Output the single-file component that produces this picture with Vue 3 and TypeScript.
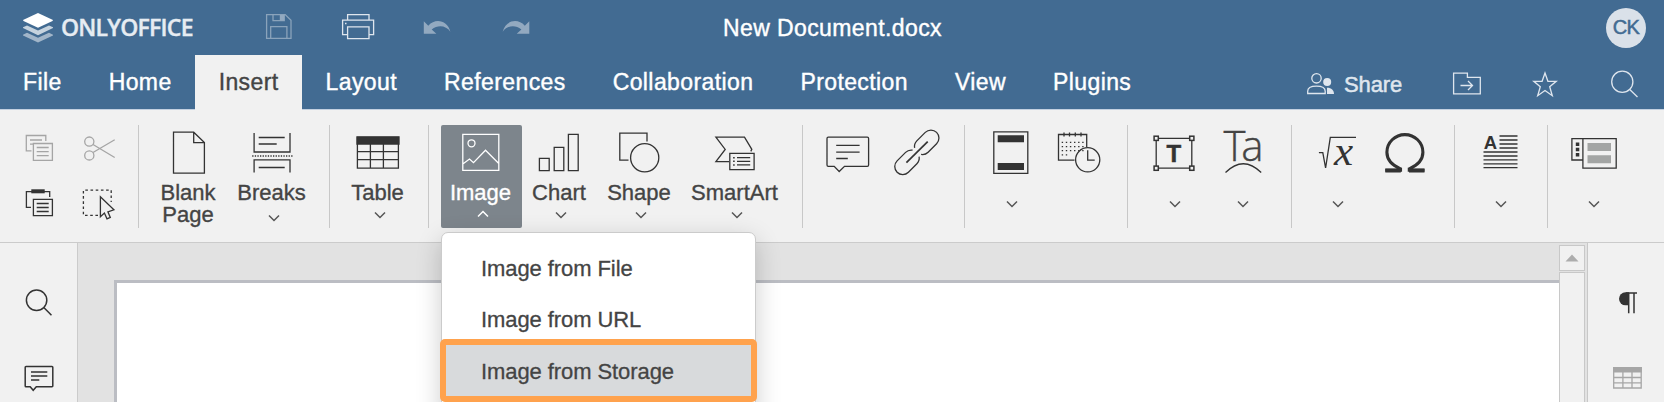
<script setup lang="ts">
interface Tool {
  id: string
  width: number
  icon: string
  label?: string
  arrow?: 'near' | 'low' | 'far'
  open?: boolean
}

interface Group {
  id: string
  width: number
  pad: number
  tools: Tool[]
}

const tabs: string[] = ['File', 'Home', 'Insert', 'Layout', 'References', 'Collaboration', 'Protection', 'View', 'Plugins']
const activeTab = 'Insert'

const menuItems: string[] = ['Image from File', 'Image from URL', 'Image from Storage']
const highlighted = 'Image from Storage'

const dateDots: string = [14.3, 18.6, 22.7]
  .map((y) => `<path d="M6.7 ${y}h22" stroke-dasharray="1.4 2.7"/>`)
  .join('') + '<path d="M6.7 26.8h7" stroke-dasharray="1.4 2.7"/>'

const handles: string = [[6.2, 10.3], [41.8, 10.3], [6.2, 40.2], [41.8, 40.2]]
  .map(([x, y]) => `<rect x="${x - 2.1}" y="${y - 2.1}" width="4.2" height="4.2" fill="#f1f1f1" stroke-width="1.5"/>`)
  .join('')

const icons: Record<string, string> = {
  page: '<path d="M9.5 4.2H29.700l10.700 10.300v30.700H9.500z M29.700 4.200v10.500h10.700"/>',
  breaks: '<path d="M6.100 5v19H42V5 M10.700 9.500h26 M10.700 16h18 M6.100 44.500V31.800H42v12.700 M10.700 39.500h26"/><path d="M4.200 28h41" stroke-dasharray="1.300 1.300"/>',
  table: '<path d="M3.4 9.5h41v30.7h-41z M3.4 23.7h41 M3.4 31.7h41 M16.4 15v25 M29.4 15v25"/><path d="M3 9h42v7H3z" fill="#333"/>',
  image: '<path d="M5.8 6.3h36v36h-36z M5.8 36l6.7-5 4 3.7 12-12.4 13.3 13.2"/><circle cx="14.5" cy="15.3" r="3.5"/>',
  chart: '<path d="M4.4 30.4h9.8v12.2H4.4z M19.2 19.4h9.6v23.2h-9.6z M33.4 6.4h9.8v36.2h-9.8z"/>',
  shape: '<path d="M32 13.5V5.2H4.8v26.9h8.7"/><circle cx="29.7" cy="29.7" r="14.1"/>',
  smart: '<path d="M18 33.6H4.9l9.3-12.2L4.9 9.2h28.6l7.3 12.2-1 2"/><path d="M18.8 25.4h24.3v16.3H18.8z M26 29.7h13.2 M26 33.3h13.2 M26 36.9h13.2"/><path d="M22.1 29.7h1.6 M22.1 33.3h1.6 M22.1 36.9h1.6" stroke-width="1.5"/>',
  comment: '<path d="M4.3 9.2h39a1.3 1.3 0 0 1 1.3 1.3V37a1.3 1.3 0 0 1-1.3 1.3H20.5l-5.3 5.2-5-5.2H4.3A1.3 1.3 0 0 1 3 37V10.5a1.3 1.3 0 0 1 1.3-1.3z M12.2 17.4h23.4 M12.2 24.1h23.4 M12.2 30.5h11.6"/>',
  link: '<path transform="translate(34.7 14.3) rotate(-45)" d="M-12.5-4.6A8 8 0 0 1-6-8H6A8 8 0 0 1 6 8H-6A8 8 0 0 1-12.5 4.6"/><path transform="translate(15 34.3) rotate(135)" d="M-12.5-4.6A8 8 0 0 1-6-8H6A8 8 0 0 1 6 8H-6A8 8 0 0 1-12.5 4.6"/><path d="M14.400 34.700 35.700 13.700" stroke-width="1.700"/>',
  header: '<path d="M6.8 3.9h34v41.4h-34z"/><path d="M10.700 7.300H37v7H10.700z M10.700 35H37v7H10.700z" fill="#333" stroke="none"/>',
  date: `<path d="M31.7 19V6.500H3.500v25.700h16 M9 4.500v4 M14.500 4.500v4 M20.300 4.500v4 M26 4.500v4"/>${dateDots}<circle cx="32.700" cy="31.800" r="12.100"/><path d="M32.700 22.200v9.900h7"/>`,
  textbox: `<path d="M6.200 10.300h35.600v29.900H6.200z"/>${handles}<text x="16.400" y="33.900" font-family="Liberation Sans" font-weight="700" font-size="24" fill="#333" stroke="#333" stroke-width=".5">T</text>`,
  textart: '<text x="5.600" y="32.900" font-family="Open Sans" font-weight="300" font-size="42" textLength="40" fill="#444" stroke="#444" stroke-width=".35">Ta</text><path d="M7.500 44.500q17.800-17.600 35.700 0"/>',
  equation: '<path d="M5.900 24.700h3.900L12.600 40 17.300 9.400h25.700"/><text x="21" y="36.800" font-family="Liberation Serif" font-style="italic" font-size="43" fill="#333" stroke="none">x</text>',
  omega: '<path d="M4.300 42.300h15.200v-1.500C9.500 36.500 5.900 31 5.900 24.200a18 17.600 0 0 1 36 0c0 6.800-3.600 12.300-13.600 16.600v1.500h15.200" stroke-width="3.100"/><path d="M4.300 42.400h15.500 M28 42.400h15.500" stroke-width="4"/>',
  dropcap: '<text x="7.700" y="20.900" font-family="Liberation Sans" font-weight="700" font-size="18.500" fill="#333" stroke="none">A</text><path d="M23.500 8h18 M23.500 12h18 M23.500 16h18 M23.500 20h18 M7.500 24h34 M7.500 28h34 M7.500 31.900h34 M7.500 35.800h34 M7.500 39.700h34"/>',
  controls: '<path d="M1.900 10.700h11V32h-11z M12.900 10.700h33.300v29.400H12.900z"/><path d="M17.500 15H41v8H17.500z M17.500 27.200H41v8H17.500z" fill="#a3a5a4" stroke="none"/><path d="M5.800 14.500h3.500v3.500H5.800z M5.800 19.800h3.500v3.500H5.800z M5.800 25h3.500v3.500H5.800z" fill="#333" stroke="none"/>',
}

const groups: Group[] = [
  { id: 'pages', width: 191, pad: 8, tools: [
    { id: 'blank', width: 84, icon: 'page', label: 'Blank Page' },
    { id: 'breaks', width: 83, icon: 'breaks', label: 'Breaks', arrow: 'low' },
  ] },
  { id: 'tables', width: 99, pad: 0, tools: [
    { id: 'table', width: 97, icon: 'table', label: 'Table', arrow: 'near' },
  ] },
  { id: 'objects', width: 374, pad: 12, tools: [
    { id: 'image', width: 81, icon: 'image', label: 'Image', arrow: 'near', open: true },
    { id: 'chart', width: 76, icon: 'chart', label: 'Chart', arrow: 'near' },
    { id: 'shape', width: 84, icon: 'shape', label: 'Shape', arrow: 'near' },
    { id: 'smartart', width: 107, icon: 'smart', label: 'SmartArt', arrow: 'near' },
  ] },
  { id: 'notes', width: 162, pad: 0, tools: [
    { id: 'comment', width: 91, icon: 'comment' },
    { id: 'link', width: 46, icon: 'link' },
  ] },
  { id: 'header', width: 163, pad: 0, tools: [
    { id: 'headerfooter', width: 94, icon: 'header', arrow: 'far' },
    { id: 'datetime', width: 42, icon: 'date' },
  ] },
  { id: 'text', width: 164, pad: 0, tools: [
    { id: 'textbox', width: 94, icon: 'textbox', arrow: 'far' },
    { id: 'textart', width: 42, icon: 'textart', arrow: 'far' },
  ] },
  { id: 'symbols', width: 163, pad: 0, tools: [
    { id: 'equation', width: 92, icon: 'equation', arrow: 'far' },
    { id: 'symbol', width: 43, icon: 'omega' },
  ] },
  { id: 'drop', width: 93, pad: 0, tools: [
    { id: 'dropcap', width: 92, icon: 'dropcap', arrow: 'far' },
  ] },
  { id: 'forms', width: 116, pad: 0, tools: [
    { id: 'controls', width: 93, icon: 'controls', arrow: 'far' },
  ] },
]
</script>

<template>
  <div class="app">
    <header class="header">
      <div class="title-row">
        <div class="brand">
          <svg width="30" height="30" viewBox="0 0 30 30">
            <path d="M0 21.700 4 19.800 15 24.700 26 19.800 30 21.700V22.500L15 29.500 0 22.500z" fill="#fff" opacity=".5" />
            <path d="M0 14.300 4 12.500 15 17.400 26 12.500 30 14.300V15.100L15 22.200 0 15.100z" fill="#fff" opacity=".7" />
            <path d="M15 0 30 7 29.500 8 15 14.700 .5 8 0 7z" fill="#fff" />
          </svg>
          <span class="brand-name">ONLYOFFICE</span>
        </div>
        <div class="quick">
          <svg class="dim" width="34" height="34" viewBox="0 0 34 34">
            <path d="M4.600 4.600h18.600l5.800 5.600v18.200H4.600z M11 4.600v6.100h11.300V4.600 M8.700 28.400V16.700h16.200v11.700" />
            <path d="M17.800 5h4.200v5.500h-4.200z" class="fill" />
          </svg>
          <svg class="bright" width="34" height="34" viewBox="0 0 34 34">
            <path d="M6.600 10V4.600H28V10 M6.600 24.700H1.600V10.100h31v14.600H28 M6.600 16.900H28v11.700H6.600z M4 13.500h1.500" />
          </svg>
          <svg class="dim" width="34" height="34" viewBox="0 0 34 34">
            <path class="fill" d="M3.800 11.300v12.500h12.600l-4.700-4.400c6.500-5 14.500-3.800 18.700 2.300C27.500 10.500 15.500 7.500 8.300 15.700z" />
          </svg>
          <svg class="dim" width="34" height="34" viewBox="0 0 34 34">
            <path class="fill" d="M30.300 11.300v12.500H17.700l4.700-4.400C16 14.400 8 15.600 3.700 21.700 6.600 10.500 18.600 7.500 25.800 15.700z" />
          </svg>
        </div>
        <div class="doc-title">New Document.docx</div>
        <div class="avatar">CK</div>
      </div>

      <nav class="tab-row">
        <div v-for="tab in tabs" :key="tab" class="tab" :class="{ active: tab === activeTab }">{{ tab }}</div>
        <div class="actions">
          <svg class="bright" width="30" height="28" viewBox="0 0 30 28">
            <circle cx="10.500" cy="7.300" r="4.700" />
            <path d="M1.700 22.500v-2.300c0-3.500 4-5 8.700-5s8.800 1.500 8.800 5v2.300z" />
            <circle cx="21.200" cy="11" r="4" class="fill" />
            <path class="fill" d="M21 16.700c4.500 0 7 2.500 7 6.300h-7z" />
          </svg>
          <span class="share">Share</span>
          <svg class="bright folder" width="30" height="28" viewBox="0 0 30 28">
            <path d="M1.600 2.200h13.800v4.200h12.900v16.400H1.600z M8.500 14.500H20 M16 10l4.500 4.500-4.500 4.500" />
          </svg>
          <svg class="bright star" width="26" height="28" viewBox="0 0 26 28">
            <path d="M13 2l2.900 8.300h8.300l-6.500 5.400 2.600 9L13 19.500l-7.300 5.200 2.600-9L1.800 10.300h8.300z" />
          </svg>
          <svg class="bright search" width="30" height="30" viewBox="0 0 30 30">
            <circle cx="12.300" cy="11.800" r="10.600" />
            <path d="M19.500 19.200l8 7.800" />
          </svg>
        </div>
      </nav>
    </header>

    <section class="toolbar">
      <div class="clipboard">
        <svg class="faded" width="36" height="36" viewBox="0 0 36 36">
          <path d="M10.500 20.900H5.300V5.500h19.500v5.500 M9 10h12 M9 14.200h3 M12.400 13.500h19v16.800h-19z M15.700 17.500h12 M15.700 21.600h12 M15.700 25.700h12" />
        </svg>
        <svg class="faded" width="36" height="36" viewBox="0 0 36 36">
          <circle cx="8.300" cy="11.600" r="4.600" />
          <circle cx="8.300" cy="25.400" r="4.600" />
          <path d="M12 14.500l21.700 13 M12 22.500l21.700-12.800" />
        </svg>
        <svg width="36" height="36" viewBox="0 0 36 36">
          <path d="M10 22.400H5.400V6.700H28.700v5.300 M12.400 14.400h19v16.300h-19z M15.700 18.500h12 M15.700 22.500h12 M15.700 26.500h12" />
          <path d="M10.300 4.300h13.400v4H10.300z" fill="#333" stroke="none" />
        </svg>
        <svg width="36" height="36" viewBox="0 0 36 36">
          <path d="M17 30.300H2.400V5.200h27.800V17" stroke-dasharray="2.600 2.600" />
          <path d="M19.400 11.700v20l4-3.700 2.600 5.800 3.300-1.400-2.400-5.600 6-2z" />
        </svg>
      </div>

      <div v-for="group in groups" :key="group.id" class="group" :style="{ width: group.width + 'px', paddingLeft: group.pad + 'px' }">
        <div v-for="tool in group.tools" :key="tool.id" class="tool" :class="[{ open: tool.open }, tool.arrow]" :style="{ width: tool.width + 'px' }">
          <svg class="icon" width="48" height="48" viewBox="0 0 48 48" v-html="icons[tool.icon]"></svg>
          <span v-if="tool.label" class="label">{{ tool.label }}</span>
          <svg v-if="tool.arrow" class="arrow" width="14" height="8" viewBox="0 0 14 8">
            <path :d="tool.open ? 'M2 6.500 7 1.500l5 5' : 'M2 1.500l5 5 5-5'" />
          </svg>
          <div v-if="tool.open" class="menu">
            <div v-for="item in menuItems" :key="item" class="menu-item" :class="{ highlighted: item === highlighted }">{{ item }}</div>
          </div>
        </div>
      </div>
    </section>

    <main class="workspace">
      <aside class="left-panel">
        <svg width="30" height="30" viewBox="0 0 30 30">
          <circle cx="12.600" cy="12.200" r="10.200" />
          <path d="M19.800 19.500l7.700 7.800" />
        </svg>
        <svg width="30" height="30" viewBox="0 0 30 30">
          <path d="M2 2.600h26a.8.8 0 0 1 .8.8v18.500a.8.8 0 0 1-.8.8H12.300L9.200 26.300 6.200 22.700H2a.8.8 0 0 1-.8-.8V3.400a.8.8 0 0 1 .8-.8z M7 8h16.300 M7 12h16.300 M7 16h8.300" />
        </svg>
      </aside>
      <div class="canvas">
        <div class="page"></div>
      </div>
      <div class="scrollbar">
        <div class="scroll-up">
          <svg width="14" height="8" viewBox="0 0 14 8"><path d="M.5 7.500 7 .5l6.500 7z" /></svg>
        </div>
        <div class="scroll-thumb"></div>
      </div>
      <aside class="right-panel">
        <svg width="30" height="24" viewBox="0 0 30 24">
          <path d="M24 2H13 M15.700 2v20.300 M21 2v20.300" stroke-width="1.500" />
          <path d="M16 1.300h-3.500a6.500 6.500 0 0 0 0 13H16z" fill="#333" stroke="none" />
        </svg>
        <svg class="gray" width="30" height="24" viewBox="0 0 30 24">
          <path d="M.7 1.700h27.500V22H.7z M.7 11.500h27.500 M.7 16.800h27.500 M9.900 6v16 M19 6v16" />
          <path class="fill" d="M0 1h28.900v5.500H0z" />
        </svg>
      </aside>
    </main>
  </div>
</template>

<style>
html,
body {
  overflow: hidden;
}
</style>

<style scoped>
.app {
  width: 1664px;
  height: 402px;
  overflow: hidden;
  display: flex;
  flex-direction: column;
  background: #f1f1f1;
  font-family: "Liberation Sans", Arial, sans-serif;
  color: #444;
}

.app * {
  box-sizing: border-box;
}

svg {
  display: block;
  flex-shrink: 0;
  fill: none;
  stroke: #333;
  stroke-width: 1.3;
  overflow: visible;
}

/* Header */
.header {
  flex: none;
  height: 110px;
  background: #426b92;
  border-bottom: 1px solid #c3d0e0;
  color: #fff;
}

.title-row {
  height: 55px;
  display: grid;
  grid-template-columns: 262px 462px 1fr 58px;
  align-items: start;
}

.brand {
  display: flex;
  gap: 8px;
  padding: 13px 0 0 23px;
}

.brand svg {
  stroke: none;
}

.brand-name {
  margin-top: -2px;
  font: 600 23px/32px "Open Sans", "Noto Sans", sans-serif;
  letter-spacing: -0.75px;
  -webkit-text-stroke: 0.4px #e6ecf2;
  color: #e6ecf2;
}

.quick {
  display: flex;
  gap: 45px;
  padding-top: 10px;
}

.bright {
  stroke: #dfe6ee;
}

.dim {
  stroke: #8aa3bb;
}

.dim .fill {
  fill: #92a9c0;
  stroke: none;
}

.bright .fill {
  fill: #dfe6ee;
  stroke: none;
}

.doc-title {
  padding-top: 15px;
  margin-left: -1px;
  font-size: 23px;
  line-height: 26px;
  letter-spacing: 0.4px;
  -webkit-text-stroke: 0.4px #fff;
  white-space: nowrap;
}

.avatar {
  width: 40px;
  height: 40px;
  margin-top: 8px;
  border-radius: 50%;
  background: #dae1e9;
  color: #426b92;
  font-size: 20px;
  line-height: 39px;
  text-align: center;
  letter-spacing: -0.6px;
  -webkit-text-stroke: 0.5px #426b92;
}

.tab-row {
  display: flex;
  height: 54px;
}

.tab {
  flex: none;
  height: 54px;
  padding: 1px 23.5px 0;
  font-size: 23px;
  line-height: 52px;
  letter-spacing: 0.4px;
  -webkit-text-stroke: 0.4px currentColor;
}

.tab:first-child {
  padding-left: 23px;
}

.tab.active {
  background: #f1f1f1;
  color: #444;
  height: 55px;
}

.actions {
  display: flex;
  margin-left: auto;
  padding: 16px 24px 0 0;
}

.share {
  margin: 0 0 0 8px;
  width: 58px;
  font-size: 22px;
  line-height: 27px;
  letter-spacing: -0.1px;
  color: #dfe6ee;
  -webkit-text-stroke: 0.5px #dfe6ee;
}

.folder {
  margin-left: 50px;
}

.star {
  margin-left: 50px;
}

.search {
  margin: -1px 0 0 52px;
}

/* Toolbar */
.toolbar {
  flex: none;
  display: flex;
  height: 133px;
  padding-top: 15px;
  border-bottom: 1px solid #cbcbcb;
}

.clipboard {
  display: grid;
  grid-template-columns: 36px 36px;
  grid-auto-rows: 36px;
  gap: 19px 24px;
  width: 139px;
  height: 103px;
  padding: 5px 0 0 21px;
  border-right: 1px solid #c8c8c8;
}

.faded {
  stroke: #a5a5a5;
}

.group {
  flex: none;
  display: flex;
  height: 103px;
  border-right: 1px solid #c8c8c8;
}

.group:last-child {
  border-right: 0;
}

.tool {
  flex: none;
  position: relative;
  display: flex;
  flex-direction: column;
  align-items: center;
  padding-top: 3px;
}

.icon {
  margin: 0 1px 0 -1px;
}

.label {
  margin-top: 6px;
  padding-right: 2px;
  font-size: 22px;
  line-height: 22px;
  text-align: center;
  -webkit-text-stroke: 0.35px currentColor;
}

.arrow {
  stroke: #555;
  stroke-width: 1.5;
  margin-left: 2px;
}

.near .arrow {
  margin-top: 7px;
}

.low .arrow {
  margin-top: 10px;
}

.far .arrow {
  margin: 24px 1px 0 0;
}

.open {
  background: #7d858c;
  border-radius: 2px;
  color: #fff;
}

.open .icon,
.open .arrow {
  stroke: #fff;
}

.open .arrow {
  margin-top: 6px;
}

.menu {
  position: absolute;
  z-index: 2;
  left: 0;
  top: 107px;
  width: 315px;
  height: 190px;
  padding-top: 12px;
  background: #fff;
  border: 1px solid #cbcbcb;
  border-radius: 7px;
  box-shadow: 0 8px 26px rgba(0, 0, 0, 0.2);
  color: #444;
}

.menu-item {
  height: 51px;
  padding-left: 39px;
  font-size: 22px;
  line-height: 48px;
  letter-spacing: -0.08px;
  -webkit-text-stroke: 0.3px currentColor;
}

.menu-item.highlighted {
  width: 317px;
  height: 63px;
  margin: -8px 0 0 -2px;
  padding-left: 35px;
  border: 6px solid #ffa24d;
  border-radius: 5px;
  background: #d8dadc;
  line-height: 53px;
}

/* Workspace */
.workspace {
  flex: 1;
  display: flex;
  min-height: 0;
}

.left-panel {
  flex: none;
  display: flex;
  flex-direction: column;
  gap: 46px;
  width: 78px;
  padding: 45px 0 0 24px;
  border-right: 1px solid #cbcbcb;
}

.left-panel svg {
  stroke-width: 1.5;
}

.canvas {
  flex: 1;
  padding: 37px 0 0 36px;
  background: #e2e2e2;
}

.page {
  height: 140px;
  background: #fff;
  border: solid #bbbdc3;
  border-width: 3px 0 0 3px;
}

.scrollbar {
  flex: none;
  width: 28px;
  padding: 2px 3px 0 0;
  background: #e2e2e2;
}

.scroll-up,
.scroll-thumb {
  width: 26px;
  border: 1px solid #c8c8c8;
  background: #f1f1f1;
}

.scroll-up {
  display: grid;
  place-items: center;
  height: 26px;
}

.scroll-up svg {
  margin-left: -1px;
  fill: #adadad;
  stroke: none;
}

.scroll-thumb {
  height: 140px;
  margin-top: 1px;
}

.right-panel {
  flex: none;
  width: 77px;
  padding: 48px 0 0 25px;
  border-left: 1px solid #c8c8c8;
}

.right-panel svg + svg {
  margin-top: 51px;
}

.gray {
  stroke: #a6a6a6;
}

.gray .fill {
  fill: #a6a6a6;
  stroke: none;
}
</style>
